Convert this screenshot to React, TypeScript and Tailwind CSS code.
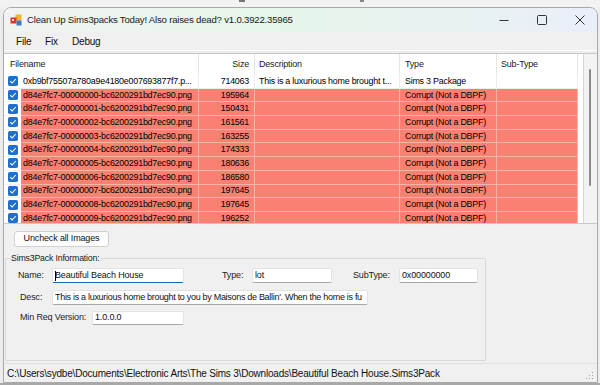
import React from "react";

type Row = { name: string; size: string; desc: string; type: string; sub: string; bad: boolean };

const rows: Row[] = [
  { name: "0xb9bf75507a780a9e4180e007693877f7.p...", size: "714063", desc: "This is a luxurious home brought t...", type: "Sims 3 Package", sub: "", bad: false },
  ...[
    "195964",
    "150431",
    "161561",
    "163255",
    "174333",
    "180636",
    "186580",
    "197645",
    "197645",
    "196252",
  ].map((s, i) => ({
    name: `d84e7fc7-0000000${i}-bc6200291bd7ec90.png`,
    size: s,
    desc: "",
    type: "Corrupt (Not a DBPF)",
    sub: "",
    bad: true,
  })),
];

function Check() {
  return (
    <svg width="10" height="10" viewBox="0 0 10 10">
      <rect x="0" y="0" width="10" height="10" rx="1.8" fill="#1f6fcf" />
      <path d="M2.2 5.2 L4.1 7 L7.8 3" stroke="#fff" strokeWidth="1.1" fill="none" />
    </svg>
  );
}

function AppIcon() {
  return (
    <svg width="12" height="12" viewBox="0 0 12 12">
      <rect x="5.5" y="0.5" width="6" height="6" fill="#f2b22b" />
      <rect x="0.5" y="3.5" width="6" height="6" fill="#e0352b" />
      <rect x="6.5" y="6.5" width="5" height="5" fill="#3d78c8" />
      <rect x="2" y="5" width="2" height="2" fill="#f7d9d4" />
    </svg>
  );
}

function TextBox({ w, value, focused, tight }: { w: string; value: string; focused?: boolean; tight?: boolean }) {
  return (
    <div
      className={`${w} h-full bg-white border border-[#e3e3e3] rounded-[2px] flex items-center pl-[2px] overflow-hidden whitespace-nowrap text-[9px] text-[#111] ${
        tight ? "tracking-[-0.3px]" : "tracking-[-0.15px]"
      } ${focused ? "border-b-[1.5px] border-b-[#1a64c4]" : "border-b-[#a7a7a7]"}`}
    >
      {focused && <span className="inline-block w-[1px] h-[10px] bg-black -mr-[1px]" />}
      {value}
    </div>
  );
}

export default function App() {
  return (
    <div className="w-[600px] h-[385px] overflow-hidden bg-[#f2f2f2] flex flex-col font-['Liberation_Sans',Arial,sans-serif] text-black">
      <div className="h-[7px] shrink-0 relative">
        <div className="absolute left-[239px] top-0 w-[6px] h-[2px] bg-[#777]" />
        <div className="absolute left-[360px] top-0 w-[4px] h-[2px] bg-[#888]" />
      </div>
      <div className="flex flex-1 min-h-0">
        <div className="w-[3px] shrink-0 bg-[#ececec]" />
        <div className="w-[595px] h-[376px] shrink-0 border border-[#a9a9a9] rounded-t-[8px] overflow-hidden flex flex-col bg-[#f0f0f0]">
          {/* Title bar */}
          <div className="h-[24px] shrink-0 flex items-center bg-[linear-gradient(90deg,#f1f3f1,#e6f6ea_45%,#e9eff8)]">
            <div className="ml-[6px] w-[12px] h-[12px] flex">
              <AppIcon />
            </div>
            <span className="ml-[5px] text-[9.6px] tracking-[-0.2px] text-[#1a1a1a] whitespace-nowrap">
              Clean Up Sims3packs Today! Also raises dead? v1.0.3922.35965
            </span>
            <div className="ml-auto flex items-center h-full">
              <svg width="10" height="10" viewBox="0 0 10 10" className="mr-[28px]">
                <path d="M0.5 5.5 H9.5" stroke="#333" strokeWidth="1" />
              </svg>
              <svg width="10" height="10" viewBox="0 0 10 10" className="mr-[28px]">
                <rect x="0.5" y="0.5" width="9" height="9" rx="1" stroke="#333" strokeWidth="1" fill="none" />
              </svg>
              <svg width="10" height="10" viewBox="0 0 10 10" className="mr-[12px]">
                <path d="M0.5 0.5 L9.5 9.5 M9.5 0.5 L0.5 9.5" stroke="#333" strokeWidth="1" />
              </svg>
            </div>
          </div>
          {/* Menu bar */}
          <div className="h-[18px] shrink-0 flex items-center pl-[12px] text-[10px] tracking-[-0.2px] text-[#111] bg-[#f0f0f0]">
            <span className="w-[29px]">File</span>
            <span className="w-[27px]">Fix</span>
            <span>Debug</span>
          </div>
          <div className="h-[1px] shrink-0 bg-white" />
          <div className="h-[2px] shrink-0 bg-[#ececec]" />
          {/* List */}
          <div className="h-[171px] shrink-0 flex border-t border-b border-[#c8c8c8] bg-white">
            <div className="w-[579px] flex flex-col overflow-hidden">
              <div className="h-[21px] shrink-0 flex text-[9px] tracking-[-0.2px] text-[#222]">
                <div className="w-[195px] border-r border-[#e5e5e5] flex items-center pl-[6px]">Filename</div>
                <div className="w-[56px] border-r border-[#e5e5e5] flex items-center justify-end pr-[5px]">Size</div>
                <div className="w-[145px] border-r border-[#e5e5e5] flex items-center pl-[4px]">Description</div>
                <div className="w-[97px] border-r border-[#e5e5e5] flex items-center pl-[5px]">Type</div>
                <div className="w-[81px] border-r border-[#e5e5e5] flex items-center pl-[4px]">Sub-Type</div>
                <div className="flex-1" />
              </div>
              <div className="flex-1 overflow-hidden">
                {rows.map((r, i) => {
                  const cell = r.bad
                    ? "bg-[#fa8072] border-r border-b border-[#fbb2a9]"
                    : "bg-white border-r border-b border-[#ededed]";
                  return (
                    <div key={i} className="h-[13.7px] flex text-[8.9px] tracking-[-0.22px] leading-none whitespace-nowrap">
                      <div className="w-[17px] shrink-0 bg-white border-b border-[#f2f2f2] flex items-center pl-[4px]">
                        <Check />
                      </div>
                      <div className={`w-[178px] shrink-0 ${cell} flex items-center pl-[2px] overflow-hidden`}>{r.name}</div>
                      <div className={`w-[56px] shrink-0 ${cell} flex items-center justify-end pr-[5px]`}>{r.size}</div>
                      <div className={`w-[145px] shrink-0 ${cell} flex items-center pl-[4px] overflow-hidden`}>{r.desc}</div>
                      <div className={`w-[97px] shrink-0 ${cell} flex items-center pl-[5px]`}>{r.type}</div>
                      <div className={`w-[81px] shrink-0 ${cell}`}>{r.sub}</div>
                      <div className="flex-1 bg-white" />
                    </div>
                  );
                })}
              </div>
            </div>
            <div className="w-[14px] border-l border-[#d6d6d6] bg-[#f3f3f3] flex justify-center pt-[15px]">
              <div className="w-[2px] h-[117px] rounded-full bg-[#8a8a8a] ml-[-1px]" />
            </div>
          </div>
          {/* Bottom panel */}
          <div className="h-[139px] shrink-0 px-[1px] pt-[7px] flex flex-col bg-[#f0f0f0]">
            <button className="ml-[9px] w-[95px] h-[16px] rounded-[3px] border border-[#d0d0d0] bg-[#fdfdfd] text-[9px] tracking-[-0.15px] text-[#111] flex items-center justify-center">
              Uncheck all Images
            </button>
            <fieldset className="mt-[6px] w-[481px] h-[108px] border border-[#d9d9d9] rounded-[1px] px-0 pb-0 m-0 text-[9px] tracking-[-0.15px] text-[#222]">
              <legend className="ml-[5px] px-0 text-[8.8px] tracking-[-0.2px] leading-[10px] text-[#222]">Sims3Pack Information:</legend>
              <div className="mt-[5px] h-[15px] flex items-center">
                <span className="w-[46px] pl-[12px]">Name:</span>
                <TextBox w="w-[132px]" value="Beautiful Beach House" focused />
                <span className="w-[68px] pl-[38px]">Type:</span>
                <TextBox w="w-[80px]" value="lot" />
                <span className="w-[67px] pl-[21px]">SubType:</span>
                <TextBox w="w-[79px]" value="0x00000000" />
              </div>
              <div className="mt-[7px] h-[15px] flex items-center">
                <span className="w-[46px] pl-[14px]">Desc:</span>
                <TextBox
                  w="w-[316px]"
                  tight
                  value="This is a luxurious home brought to you by Maisons de Ballin'. When the home is fu"
                />
              </div>
              <div className="mt-[6px] h-[14px] flex items-center">
                <span className="w-[86px] pl-[14px]">Min Req Version:</span>
                <TextBox w="w-[92px]" value="1.0.0.0" />
              </div>
            </fieldset>
          </div>
          {/* Status bar */}
          <div className="h-[19px] shrink-0 border-t border-[#e0e0e0] flex items-center pl-[3px] text-[10px] tracking-[-0.2px] text-[#111] bg-[#f0f0f0]">
            <span className="whitespace-nowrap">
              C:\Users\sydbe\Documents\Electronic Arts\The Sims 3\Downloads\Beautiful Beach House.Sims3Pack
            </span>
            <svg width="8" height="8" viewBox="0 0 8 8" className="ml-auto mr-[3px] mt-[6px]">
              <rect x="6" y="0" width="1" height="1" fill="#a0a0a0" />
              <rect x="6" y="3" width="1" height="1" fill="#a0a0a0" />
              <rect x="3" y="3" width="1" height="1" fill="#a0a0a0" />
              <rect x="6" y="6" width="1" height="1" fill="#a0a0a0" />
              <rect x="3" y="6" width="1" height="1" fill="#a0a0a0" />
              <rect x="0" y="6" width="1" height="1" fill="#a0a0a0" />
            </svg>
          </div>
        </div>
        <div className="flex-1 bg-[#ececec]" />
      </div>
      <div className="h-[2px] shrink-0 bg-[#a8a8a8]" />
    </div>
  );
}
